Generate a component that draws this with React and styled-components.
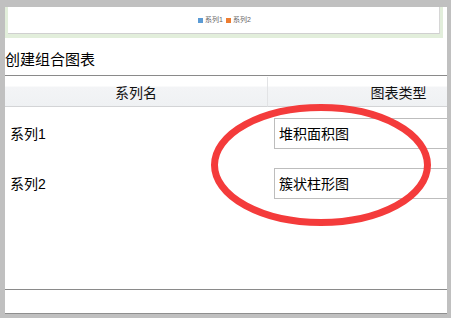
import React from "react";
import styled, { createGlobalStyle } from "styled-components";

const GlobalStyle = createGlobalStyle`
  html, body {
    margin: 0;
    padding: 0;
    background: #c0c0c0;
  }
  * {
    box-sizing: border-box;
  }
`;

const Frame = styled.div`
  width: 451px;
  height: 318px;
  background: #c0c0c0;
  padding: 7px 4px 0 5px;
  font-family: "Liberation Sans", "Noto Sans CJK SC", sans-serif;
  color: #000;
`;

const Panel = styled.div`
  position: relative;
  height: 307px;
  background: #fff;
  border-bottom: 1px solid #8e8e8e;
  display: flex;
  flex-direction: column;
  overflow: hidden;
`;

const ChartStrip = styled.div`
  height: 31px;
  margin-right: 4px;
  background: #e2eedb;
  padding: 0 3px 4px 3px;
`;

const ChartBox = styled.div`
  height: 27px;
  background: #fff;
  border-right: 1px solid #d6d6d6;
  border-bottom: 1px solid #d0d0d0;
  display: flex;
  align-items: center;
  justify-content: center;
  gap: 3px;
  padding-left: 2px;
`;

const LegendItem = styled.span`
  display: flex;
  align-items: center;
  gap: 2px;
  font-size: 7px;
  line-height: 8px;
  color: #666;
`;

const Swatch = styled.span`
  width: 5px;
  height: 5px;
  background: ${(p) => p.color};
`;

const Title = styled.div`
  padding-top: 12px;
  padding-bottom: 5px;
  height: 38px;
  font-size: 15px;
  line-height: 20px;
  border-bottom: 1px solid #8a8a8a;
`;

const TableWrap = styled.div`
  flex: 1;
  overflow: hidden;
  padding-top: 1px;
`;

const Table = styled.div`
  width: 524px;
  display: grid;
  grid-template-columns: 262px 262px;
`;

const HeadCell = styled.div`
  height: 30px;
  display: flex;
  align-items: center;
  justify-content: center;
  font-size: 14px;
  color: #111;
  background: linear-gradient(#fff 0%, #fff 30%, #f3f4f6 36%, #eff1f3 100%);
  border-bottom: 1px solid #d3d4d6;
  border-left: ${(p) => (p.divider ? "1px solid #e2e3e5" : "none")};
`;

const Cell = styled.div`
  height: 50px;
  display: flex;
  align-items: center;
  padding-left: ${(p) => p.pad}px;
  padding-top: 2px;
  font-size: 14px;
`;

const TypeBox = styled.div`
  width: 240px;
  height: 31px;
  border: 1px solid #bdbdbd;
  display: flex;
  align-items: center;
  padding-left: 4px;
  font-size: 14px;
`;

const Footer = styled.div`
  height: 24px;
  border-top: 1px solid #8a8a8a;
`;

const Marker = styled.svg`
  position: absolute;
  left: 200px;
  top: 93px;
  pointer-events: none;
`;

const series = [
  { name: "系列1", type: "堆积面积图" },
  { name: "系列2", type: "簇状柱形图" },
];

export default function App() {
  return (
    <Frame>
      <GlobalStyle />
      <Panel>
        <ChartStrip>
          <ChartBox>
            <LegendItem>
              <Swatch color="#5b9bd5" />
              系列1
            </LegendItem>
            <LegendItem>
              <Swatch color="#ed7d31" />
              系列2
            </LegendItem>
          </ChartBox>
        </ChartStrip>
        <Title>创建组合图表</Title>
        <TableWrap>
          <Table>
            <HeadCell>系列名</HeadCell>
            <HeadCell divider>图表类型</HeadCell>
            {series.map((s) => (
              <React.Fragment key={s.name}>
                <Cell pad={5}>{s.name}</Cell>
                <Cell pad={7}>
                  <TypeBox>{s.type}</TypeBox>
                </Cell>
              </React.Fragment>
            ))}
          </Table>
        </TableWrap>
        <Footer />
        {/* red annotation circle drawn over the type column */}
        <Marker width="240" height="140" viewBox="0 0 240 140">
          <ellipse
            cx="116"
            cy="65"
            rx="106.5"
            ry="57.5"
            fill="none"
            stroke="#f43b3b"
            strokeWidth="7"
          />
        </Marker>
      </Panel>
    </Frame>
  );
}
